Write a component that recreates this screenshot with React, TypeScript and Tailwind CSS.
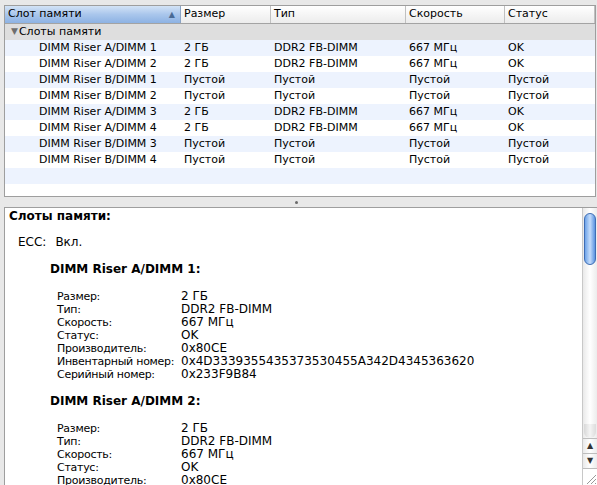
import React from "react";

const rows: string[][] = [
  ["DIMM Riser A/DIMM 1", "2 ГБ", "DDR2 FB-DIMM", "667 МГц", "OK"],
  ["DIMM Riser A/DIMM 2", "2 ГБ", "DDR2 FB-DIMM", "667 МГц", "OK"],
  ["DIMM Riser B/DIMM 1", "Пустой", "Пустой", "Пустой", "Пустой"],
  ["DIMM Riser B/DIMM 2", "Пустой", "Пустой", "Пустой", "Пустой"],
  ["DIMM Riser A/DIMM 3", "2 ГБ", "DDR2 FB-DIMM", "667 МГц", "OK"],
  ["DIMM Riser A/DIMM 4", "2 ГБ", "DDR2 FB-DIMM", "667 МГц", "OK"],
  ["DIMM Riser B/DIMM 3", "Пустой", "Пустой", "Пустой", "Пустой"],
  ["DIMM Riser B/DIMM 4", "Пустой", "Пустой", "Пустой", "Пустой"],
];

const cols = "grid grid-cols-[176px_90px_135px_99px_1fr]";

function Detail({ items }: { items: [string, string][] }) {
  return (
    <div className="ml-[48px] mt-[14px] flex flex-col">
      {items.map(([k, v]) => (
        <div key={k} className="flex h-[13px] items-center whitespace-nowrap leading-[13px]">
          <span className="w-[124px] shrink-0 text-[11px] tracking-tight">{k}</span>
          <span>{v}</span>
        </div>
      ))}
    </div>
  );
}

export default function App() {
  const d1: [string, string][] = [
    ["Размер:", "2 ГБ"],
    ["Тип:", "DDR2 FB-DIMM"],
    ["Скорость:", "667 МГц"],
    ["Статус:", "OK"],
    ["Производитель:", "0x80CE"],
    ["Инвентарный номер:", "0x4D3339355435373530455A342D4345363620"],
    ["Серийный номер:", "0x233F9B84"],
  ];
  const d2: [string, string][] = [
    ["Размер:", "2 ГБ"],
    ["Тип:", "DDR2 FB-DIMM"],
    ["Скорость:", "667 МГц"],
    ["Статус:", "OK"],
    ["Производитель:", "0x80CE"],
    ["Инвентарный номер:", "0x4D3339355435373530455A342D4345363620"],
  ];
  return (
    <div className="flex h-[485px] w-[597px] flex-col overflow-hidden bg-[#e8e8e8] pt-[5px] font-['DejaVu_Sans',sans-serif] text-black">
      {/* Top table */}
      <div className="ml-[4px] mr-[1px] flex h-[192px] shrink-0 flex-col border border-[#9e9e9e] bg-white text-[11px]">
        <div className={`${cols} h-[18px] shrink-0 border-b border-[#a3a3a3]`}>
          <div className="flex items-center justify-between border-r border-[#8aa3c4] bg-gradient-to-b from-[#d3e3f6] via-[#a9c6ec] to-[#8db2e3] pl-[3px] pr-[5px]">
            <span>Слот памяти</span>
            <span className="text-[8px] text-[#4a6a94]">▲</span>
          </div>
          <div className="flex items-center border-r border-[#c0c0c0] bg-gradient-to-b from-white to-[#ececec] px-[3px]">Размер</div>
          <div className="flex items-center border-r border-[#c0c0c0] bg-gradient-to-b from-white to-[#ececec] px-[3px]">Тип</div>
          <div className="flex items-center border-r border-[#c0c0c0] bg-gradient-to-b from-white to-[#ececec] px-[3px]">Скорость</div>
          <div className="flex items-center border-r border-[#c0c0c0] bg-gradient-to-b from-white to-[#ececec] px-[3px]">Статус</div>
        </div>
        <div className="flex h-[16px] shrink-0 items-center bg-[#dedede] pl-[6px]">
          <span className="mr-[1px] text-[9px] text-[#6e6e6e]">▼</span>
          <span>Слоты памяти</span>
        </div>
        {rows.map((r, i) => (
          <div key={i} className={`${cols} h-[16px] shrink-0 items-center ${i % 2 === 0 ? "bg-[#edf3fe]" : "bg-white"}`}>
            <span className="pl-[34px]">{r[0]}</span>
            <span className="px-[3px]">{r[1]}</span>
            <span className="px-[3px]">{r[2]}</span>
            <span className="px-[3px]">{r[3]}</span>
            <span className="px-[3px]">{r[4]}</span>
          </div>
        ))}
        <div className="h-[16px] shrink-0 bg-[#edf3fe]" />
        <div className="flex-1 bg-white" />
      </div>

      {/* Splitter */}
      <div className="flex h-[10px] shrink-0 items-center justify-center">
        <div className="ml-[-4px] h-[3px] w-[3px] rounded-full bg-[#6a6a6a]" />
      </div>

      {/* Bottom detail */}
      <div className="ml-[4px] flex min-h-0 flex-1 border-l border-t border-[#9e9e9e] bg-white text-[12px]">
        <div className="flex-1 overflow-hidden pl-[4px] pt-[1px]">
          <div className="h-[15px] font-bold leading-[15px]">Слоты памяти:</div>
          <div className="ml-[9px] mt-[12px] flex h-[13px] items-center leading-[13px]">
            <span>ECC:</span>
            <span className="ml-[9px]">Вкл.</span>
          </div>
          <div className="ml-[41px] mt-[14px] h-[13px] font-bold leading-[13px]">DIMM Riser A/DIMM 1:</div>
          <Detail items={d1} />
          <div className="ml-[41px] mt-[14px] h-[13px] font-bold leading-[13px]">DIMM Riser A/DIMM 2:</div>
          <Detail items={d2} />
        </div>
        {/* Scrollbar */}
        <div className="flex w-[15px] shrink-0 flex-col border-l border-[#c8c8c8] bg-gradient-to-r from-[#e9e9e9] via-white to-[#ececec]">
          <div className="relative flex-1">
            <div className="absolute left-[1px] top-[5px] h-[52px] w-[12px] rounded-full border border-[#3e6db4] bg-gradient-to-r from-[#6ea3e8] via-[#c4dcfa] to-[#5b93e0]" />
            <div className="absolute bottom-0 left-[1px] h-[14px] w-[12px] rounded-b-full bg-gradient-to-r from-[#d8d8d8] via-[#f4f4f4] to-[#dcdcdc]" />
          </div>
          <div className="flex h-[15px] items-center justify-center border-t border-[#bdbdbd] text-[8px] text-[#333]">▲</div>
          <div className="flex h-[15px] items-center justify-center border-t border-[#bdbdbd] text-[8px] text-[#333]">▼</div>
          <div className="relative h-[17px] border-t border-[#bdbdbd] bg-white">
            <svg className="absolute bottom-0 right-0" width="13" height="13" viewBox="0 0 13 13">
              <path d="M12 3 L3 12 M12 7 L7 12 M12 11 L11 12" stroke="#999" strokeWidth="1" />
            </svg>
          </div>
        </div>
      </div>
    </div>
  );
}
